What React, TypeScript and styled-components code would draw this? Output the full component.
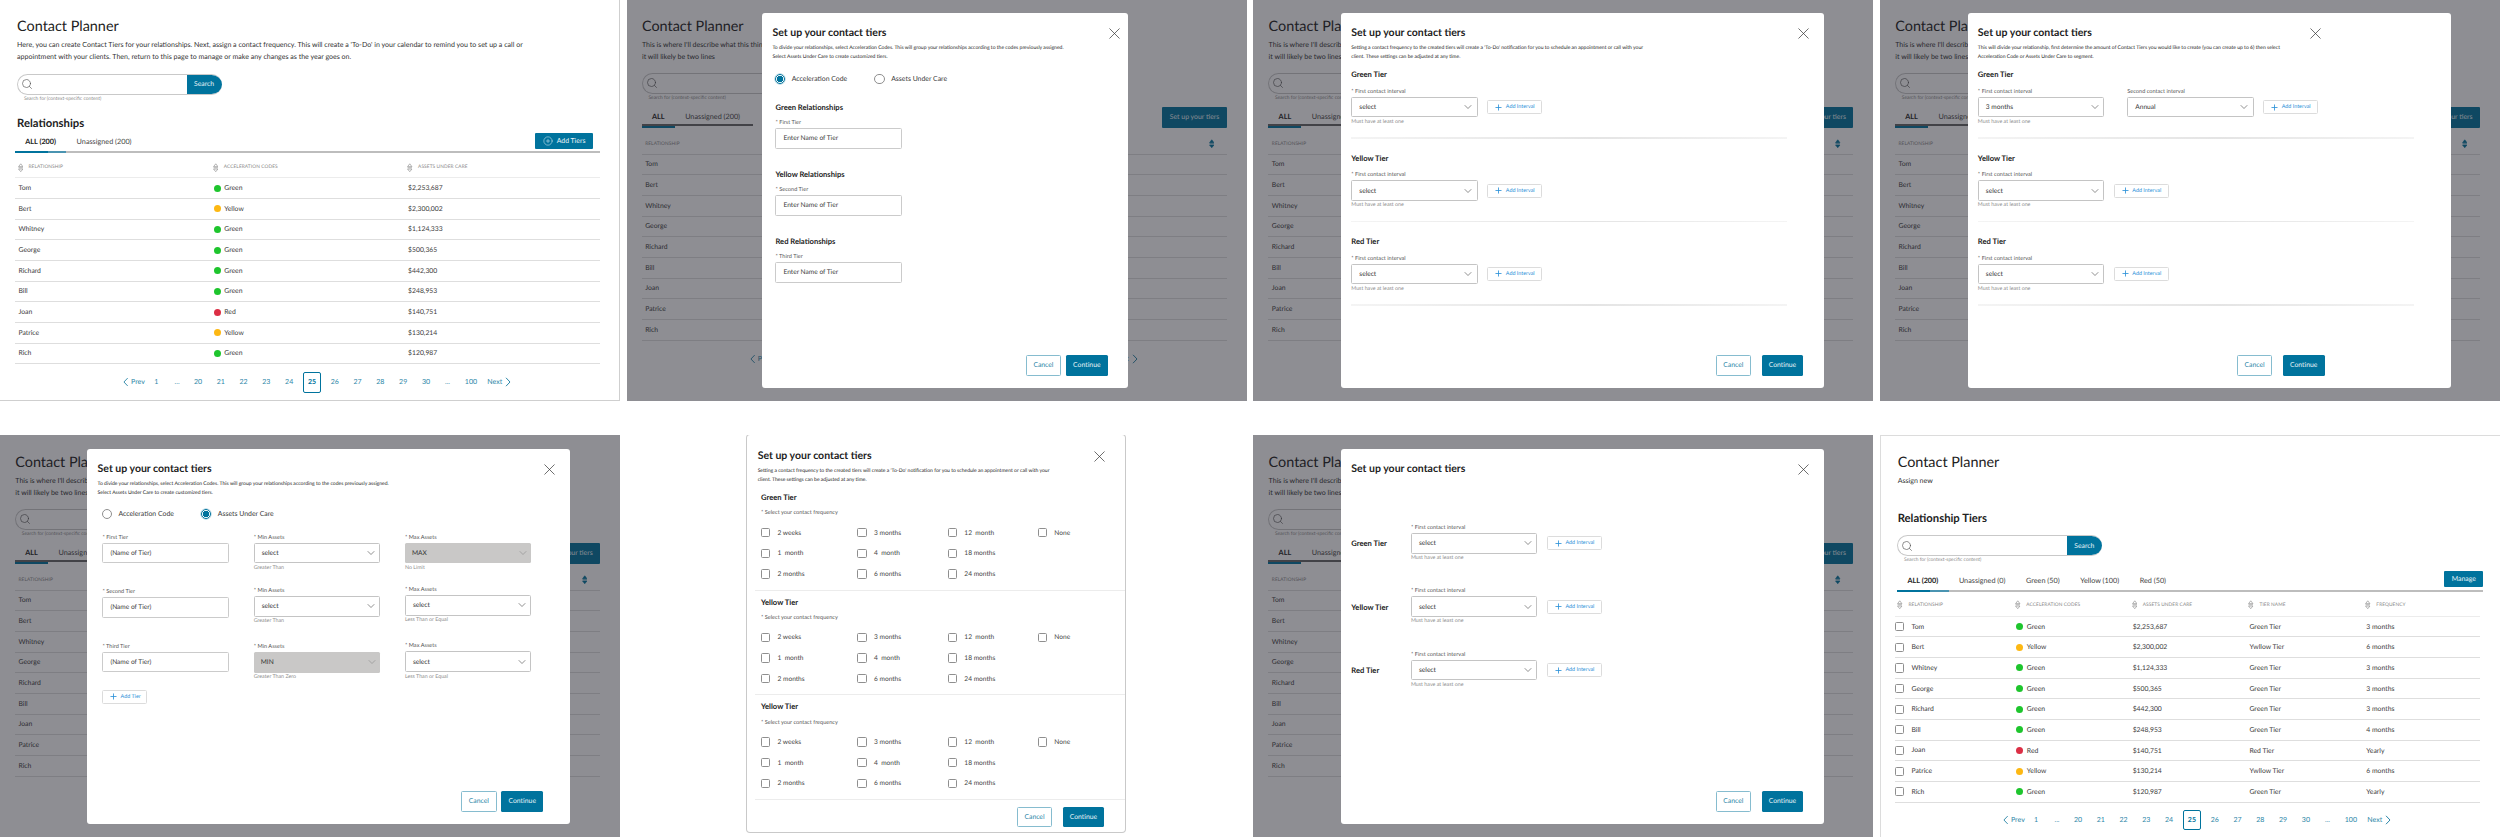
import * as React from 'react';
import styled, { createGlobalStyle } from 'styled-components';
import { ChevronDown, CirclePlus, Plus, Search, X } from 'lucide-react';

const TEAL = '#00739d';
const LINK = '#2d87a8';

const GlobalStyle = createGlobalStyle`
    html, body {
        margin: 0;
        padding: 0;
        background: #fff;
        overflow: hidden;
    }
    body {
        font-family: Lato, "Liberation Sans", sans-serif;
        color: #333;
        text-rendering: geometricPrecision;
    }
    * {
        box-sizing: border-box;
    }
`;

const names = ['Tom', 'Bert', 'Whitney', 'George', 'Richard', 'Bill', 'Joan', 'Patrice', 'Rich'];

const clients = [
    { name: 'Tom', code: 'Green', assets: '$2,253,687', tier: 'Green Tier', freq: '3 months' },
    { name: 'Bert', code: 'Yellow', assets: '$2,300,002', tier: 'Ywllow Tier', freq: '6 months' },
    { name: 'Whitney', code: 'Green', assets: '$1,124,333', tier: 'Green Tier', freq: '3 months' },
    { name: 'George', code: 'Green', assets: '$500,365', tier: 'Green Tier', freq: '3 months' },
    { name: 'Richard', code: 'Green', assets: '$442,300', tier: 'Green Tier', freq: '3 months' },
    { name: 'Bill', code: 'Green', assets: '$248,953', tier: 'Green Tier', freq: '4 months' },
    { name: 'Joan', code: 'Red', assets: '$140,751', tier: 'Red Tier', freq: 'Yearly' },
    { name: 'Patrice', code: 'Yellow', assets: '$130,214', tier: 'Ywllow Tier', freq: '6 months' },
    { name: 'Rich', code: 'Green', assets: '$120,987', tier: 'Green Tier', freq: 'Yearly' },
];

const dotColors: Record<string, string> = {
    Green: '#1ec52d',
    Yellow: '#fdb813',
    Red: '#dc2f45',
};

const frequencies = [
    ['2 weeks', '3 months', '12  month', 'None'],
    ['1  month', '4  month', '18 months', ''],
    ['2 months', '6 months', '24 months', ''],
];

const SortIcon = ({ solid }: { solid?: boolean }) => (
    <SortSvg viewBox="0 0 6 10" $solid={solid}>
        <path d="M3 .7 5.4 3.8H.6Z" />
        <path d="M.6 5h4.8" />
        <path d="M3 9.3.6 6.4h4.8Z" />
    </SortSvg>
);

const PagerArrow = ({ flip }: { flip?: boolean }) => (
    <svg width="6" height="10" viewBox="0 0 6 10" fill="none" stroke={LINK} strokeWidth="1">
        <path d={flip ? 'M1 .8 5 5 1 9.2' : 'M5 .8 1 5l4 4.2'} />
    </svg>
);

const Pager = ({ offset }: { offset: number }) => (
    <PagerRow $offset={offset}>
        <PagerEnd>
            <PagerArrow />
            Prev
        </PagerEnd>
        <PagerCell>1</PagerCell>
        <PagerGap $width={19}>...</PagerGap>
        {[20, 21, 22, 23, 24].map((n) => <PagerCell key={n}>{n}</PagerCell>)}
        <PagerCell><PagerActive>25</PagerActive></PagerCell>
        {[26, 27, 28, 29, 30].map((n) => <PagerCell key={n}>{n}</PagerCell>)}
        <PagerGap $width={20.4}>...</PagerGap>
        <PagerGap $width={26.4}>100</PagerGap>
        <PagerEnd $next>
            Next
            <PagerArrow flip />
        </PagerEnd>
    </PagerRow>
);

const SearchBox = ({ top, indent }: { top: number; indent: number }) => (
    <>
        <SearchBar $top={top} $indent={indent}>
            <SearchField>
                <Search size={12} strokeWidth={1.3} color="#555" />
            </SearchField>
            <SearchButton>Search</SearchButton>
        </SearchBar>
        <SearchHint $indent={indent + 6.8}>Search for (context-specific content)</SearchHint>
    </>
);

const DimmedPage = () => (
    <Page>
        <PageTitle $indent={0.3}>Contact Planner</PageTitle>
        <PageText $indent={0.3}>
            This is where I'll describe what this thing does<br />
            it will likely be two lines
        </PageText>
        <SearchBox top={11.1} indent={0} />
        <TabBar $top={6.3}>
            <TabList $width={111}>
                <Tab $active>ALL</Tab>
                <Tab>Unassigned (200)</Tab>
            </TabList>
            <ActionButton $width={64.3} $height={21} $raise={-1}>Set up your tiers</ActionButton>
        </TabBar>
        <DimHead>
            <HeadLabel>Relationship</HeadLabel>
            <SortIcon solid />
        </DimHead>
        {names.map((n) => <DimRow key={n}>{n}</DimRow>)}
        <Pager offset={8} />
    </Page>
);

const Field = ({ label, top, hint, children }: {
    label: string;
    top?: number;
    hint?: string;
    children: React.ReactNode;
}) => (
    <FieldWrap $top={top}>
        <FieldLabel>{label}</FieldLabel>
        {children}
        {hint && <FieldHint>{hint}</FieldHint>}
    </FieldWrap>
);

const Select = ({ value, disabled }: { value: string; disabled?: boolean }) => (
    <SelectBox $disabled={disabled}>
        {value}
        <ChevronDown size={12} strokeWidth={1.2} color={disabled ? '#8a8a8a' : '#444'} />
    </SelectBox>
);

const AddButton = ({ children, top, width, left }: {
    children: string;
    top: number;
    width: number;
    left?: number;
}) => (
    <AddBtn $top={top} $width={width} $left={left}>
        <Plus size={9} strokeWidth={2.2} />
        {children}
    </AddBtn>
);

const ModalHead = ({ closeRight, text }: { closeRight: number; text?: React.ReactNode }) => (
    <>
        <TitleRow $closeRight={closeRight}>
            <ModalTitle>Set up your contact tiers</ModalTitle>
            <CloseIcon size={19} strokeWidth={0.9} color="#333" />
        </TitleRow>
        {text && <ModalText>{text}</ModalText>}
    </>
);

const ModalFooter = ({ right, gap }: { right: number; gap: number }) => (
    <Footer $right={right} $gap={gap}>
        <CancelButton>Cancel</CancelButton>
        <ContinueButton>Continue</ContinueButton>
    </Footer>
);

const Radios = ({ picked, top, indent }: { picked: number; top: number; indent: number }) => (
    <RadioRow $top={top} $indent={indent}>
        {['Acceleration Code', 'Assets Under Care'].map((label, i) => (
            <RadioItem key={label}>
                <RadioMark $on={picked === i} />
                {label}
            </RadioItem>
        ))}
    </RadioRow>
);

const ACCEL_TEXT = (
    <>
        To divide your relationships, select Acceleration Codes. This will group your relationships according to the codes previously assigned.<br />
        Select Assets Under Care to create customized tiers.
    </>
);

const FREQ_TEXT = (
    <>
        Setting a contact frequency to the created tiers will create a 'To-Do' notification for you to schedule an appointment or call with your<br />
        client. These settings can be adjusted at any time.
    </>
);

const SEGMENT_TEXT = (
    <>
        This will divide your relationship, first determine the amount of Contact Tiers you would like to create (you can create up to 6) then select<br />
        Acceleration Code or Assets Under Care to segment.
    </>
);

const accelGroups = [
    ['Green Relationships', '* First Tier'],
    ['Yellow Relationships', '* Second Tier'],
    ['Red Relationships', '* Third Tier'],
];

const IntervalSections = ({ second }: { second?: boolean }) => (
    <>
        {['Green Tier', 'Yellow Tier', 'Red Tier'].map((tier, i) => (
            <IntervalSection key={tier}>
                <TierHeading>{tier}</TierHeading>
                <IntervalRow>
                    <Field label="* First contact interval" hint="Must have at least one">
                        <Select value={second && i === 0 ? '3 months' : 'select'} />
                    </Field>
                    {second && i === 0 && (
                        <SecondField>
                            <Field label="Second contact interval">
                                <Select value="Annual" />
                            </Field>
                        </SecondField>
                    )}
                    <AddButton top={12.25} width={55} left={9.3}>Add Interval</AddButton>
                </IntervalRow>
                <Divider />
            </IntervalSection>
        ))}
    </>
);

const assetColumns = [
    [
        { label: '* First Tier', top: 0 },
        { label: '* Second Tier', top: 16.4 },
        { label: '* Third Tier', top: 16.6 },
    ],
    [
        { label: '* Min Assets', top: 0, value: 'select', hint: 'Greater Than' },
        { label: '* Min Assets', top: 15.4, value: 'select', hint: 'Greater Than' },
        { label: '* Min Assets', top: 18, value: 'MIN', hint: 'Greater Than Zero', off: true },
    ],
    [
        { label: '* Max Assets', top: 0, value: 'MAX', hint: 'No Limit', off: true },
        { label: '* Max Assets', top: 14.4, value: 'select', hint: 'Less Than or Equal' },
        { label: '* Max Assets', top: 18.3, value: 'select', hint: 'Less Than or Equal' },
    ],
];

const MAIN_COLS = '195.2px 194.4px 1fr';
const TIER_COLS = '117.8px 116.4px 116.8px 116.9px 1fr';

const App = () => (
    <>
        <GlobalStyle />
        <Board>
            {/* landing */}
            <Frame $edge="inset -1px -1px 0 #cfcfcf">
                <Page>
                    <PageTitle $indent={2.1}>Contact Planner</PageTitle>
                    <PageText $indent={2.1}>
                        Here, you can create Contact Tiers for your relationships. Next, assign a contact frequency. This will create a 'To-Do' in your calendar to remind you to set up a call or<br />
                        appointment with your clients. Then, return to this page to manage or make any changes as the year goes on.
                    </PageText>
                    <SearchBox top={12.1} indent={2.1} />
                    <SectionTitle $top={14.3} $indent={2.1}>Relationships</SectionTitle>
                    <TabBar $top={2} $ruled>
                        <TabList>
                            <Tab $active>ALL (200)</Tab>
                            <Tab>Unassigned (200)</Tab>
                        </TabList>
                        <ActionButton $width={57.3} $height={16.3} $right={7.3}>
                            <CirclePlus size={10} strokeWidth={1.2} />
                            Add Tiers
                        </ActionButton>
                    </TabBar>
                    <TableHead $cols={MAIN_COLS} $height={25.7} $pad={4.9}>
                        <HeadCell><SortIcon /><HeadLabel>Relationship</HeadLabel></HeadCell>
                        <HeadCell><SortIcon /><HeadLabel>Acceleration Codes</HeadLabel></HeadCell>
                        <HeadCell><SortIcon /><HeadLabel>Assets Under Care</HeadLabel></HeadCell>
                    </TableHead>
                    {clients.map((c) => (
                        <TableRow key={c.name} $cols={MAIN_COLS}>
                            <Cell>{c.name}</Cell>
                            <Cell><Dot $color={dotColors[c.code]} />{c.code}</Cell>
                            <Cell>{c.assets}</Cell>
                        </TableRow>
                    ))}
                    <Pager offset={7.6} />
                </Page>
            </Frame>

            {/* acceleration code */}
            <Frame>
                <DimmedPage />
                <Backdrop $left={135.5} $top={14}>
                    <Modal $width={366} $height={375}>
                        <ModalHead closeRight={4.5} text={ACCEL_TEXT} />
                        <Radios picked={0} top={12.15} indent={2.45} />
                        {accelGroups.map(([title, label], i) => (
                            <AccelGroup key={title} $top={i === 0 ? 17.5 : 20}>
                                <TierHeading>{title}</TierHeading>
                                <AccelLabel>{label}</AccelLabel>
                                <TextBox>Enter Name of Tier</TextBox>
                            </AccelGroup>
                        ))}
                        <ModalFooter right={20.5} gap={4.8} />
                    </Modal>
                </Backdrop>
            </Frame>

            {/* intervals */}
            <Frame>
                <DimmedPage />
                <Backdrop $left={87.7} $top={14}>
                    <Modal $width={483} $height={375}>
                        <ModalHead closeRight={11.5} text={FREQ_TEXT} />
                        <IntervalSections />
                        <ModalFooter right={20.7} gap={10.5} />
                    </Modal>
                </Backdrop>
            </Frame>

            {/* second interval */}
            <Frame>
                <DimmedPage />
                <Backdrop $left={87.6} $top={14}>
                    <Modal $width={483} $height={375}>
                        <ModalHead closeRight={125.7} text={SEGMENT_TEXT} />
                        <IntervalSections second />
                        <ModalFooter right={126} gap={10.5} />
                    </Modal>
                </Backdrop>
            </Frame>

            {/* assets under care */}
            <Frame>
                <DimmedPage />
                <Backdrop $left={87.3} $top={14}>
                    <Modal $width={483} $height={375}>
                        <ModalHead closeRight={11.5} text={ACCEL_TEXT} />
                        <Radios picked={1} top={11.4} indent={3.95} />
                        <AssetGrid>
                            {assetColumns.map((col, c) => (
                                <AssetColumn key={c}>
                                    {col.map((f) => (
                                        <Field key={f.label + f.top} label={f.label} top={f.top} hint={'hint' in f ? f.hint : undefined}>
                                            {'value' in f
                                                ? <Select value={f.value as string} disabled={'off' in f} />
                                                : <TextBox>(Name of Tier)</TextBox>}
                                        </Field>
                                    ))}
                                </AssetColumn>
                            ))}
                        </AssetGrid>
                        <AddTierRow>
                            <AddButton top={0} width={45}>Add Tier</AddButton>
                        </AddTierRow>
                        <ModalFooter right={27.2} gap={4.8} />
                    </Modal>
                </Backdrop>
            </Frame>

            {/* contact frequency */}
            <Frame>
                <Backdrop $left={120.7} $top={0} $clear>
                    <Modal $width={378} $height={396.7} $outlined $bottom={4.4}>
                        <ModalHead closeRight={16.5} text={FREQ_TEXT} />
                        {['Green Tier', 'Yellow Tier', 'Yellow Tier'].map((tier, i) => (
                            <FreqSection key={tier + i} $top={i === 0 ? 1.5 : 0}>
                                <TierHeading>{tier}</TierHeading>
                                <FreqLabel>* Select your contact frequency</FreqLabel>
                                <FreqGrid>
                                    {frequencies.flat().map((f, k) => (
                                        <FreqItem key={k}>
                                            {f && <CheckBox />}
                                            {f}
                                        </FreqItem>
                                    ))}
                                </FreqGrid>
                            </FreqSection>
                        ))}
                        <ModalFooter right={21} gap={10.4} />
                    </Modal>
                </Backdrop>
            </Frame>

            {/* inline tier rows */}
            <Frame>
                <DimmedPage />
                <Backdrop $left={87.7} $top={14}>
                    <Modal $width={483} $height={375}>
                        <ModalHead closeRight={11.5} />
                        <InlineList>
                            {['Green Tier', 'Yellow Tier', 'Red Tier'].map((tier) => (
                                <InlineRow key={tier}>
                                    <InlineName>{tier}</InlineName>
                                    <Field label="* First contact interval" hint="Must have at least one">
                                        <Select value="select" />
                                    </Field>
                                    <AddButton top={12.25} width={55} left={9.3}>Add Interval</AddButton>
                                </InlineRow>
                            ))}
                        </InlineList>
                        <ModalFooter right={20.7} gap={10.5} />
                    </Modal>
                </Backdrop>
            </Frame>

            {/* tiers assigned */}
            <Frame $edge="inset 1px 1px 0 #dcdcdc">
                <Page>
                    <PageTitle $indent={2.7}>Contact Planner</PageTitle>
                    <PageText $indent={2.7}>Assign new</PageText>
                    <SectionTitle $top={25.1} $indent={2.7}>Relationship Tiers</SectionTitle>
                    <SearchBox top={9.6} indent={2.3} />
                    <TabBar $top={8.2} $ruled $indent={2.3} $overhang={3.5}>
                        <TabList>
                            <Tab $active>ALL (200)</Tab>
                            <Tab>Unassigned (0)</Tab>
                            <Tab>Green (50)</Tab>
                            <Tab>Yellow (100)</Tab>
                            <Tab>Red (50)</Tab>
                        </TabList>
                        <ActionButton $width={39.2} $height={16.3} $raise={-1.2}>Manage</ActionButton>
                    </TabBar>
                    <TableHead $cols={TIER_COLS} $height={24.9} $pad={2.7}>
                        {['Relationship', 'Acceleration Codes', 'Assets Under Care', 'Tier Name', 'Frequency'].map((h) => (
                            <HeadCell key={h}><SortIcon /><HeadLabel>{h}</HeadLabel></HeadCell>
                        ))}
                    </TableHead>
                    {clients.map((c) => (
                        <TableRow key={c.name} $cols={TIER_COLS}>
                            <Cell $flush><CheckBox />{c.name}</Cell>
                            <Cell><Dot $color={dotColors[c.code]} />{c.code}</Cell>
                            <Cell>{c.assets}</Cell>
                            <Cell>{c.tier}</Cell>
                            <Cell>{c.freq}</Cell>
                        </TableRow>
                    ))}
                    <Pager offset={6.9} />
                </Page>
            </Frame>
        </Board>
    </>
);

const Board = styled.div`
    width: 2500px;
    margin-top: -1px;
    display: grid;
    grid-template-columns: repeat(4, 620px);
    grid-auto-rows: 402px;
    column-gap: 6.667px;
    row-gap: 34px;
`;

const Frame = styled.section<{ $edge?: string }>`
    position: relative;
    overflow: hidden;
    background: #fff;
    box-shadow: ${(p) => p.$edge || 'none'};
`;

const Page = styled.div`
    height: 100%;
    padding: 20px 20px 0 15px;
    display: flex;
    flex-direction: column;
`;

const PageTitle = styled.h1<{ $indent: number }>`
    margin: 0 0 0 ${(p) => p.$indent}px;
    font-size: 14.4px;
    line-height: 16px;
    font-weight: 400;
    color: #222;
    white-space: nowrap;
`;

const PageText = styled.p<{ $indent: number }>`
    margin: 4.3px 0 0 ${(p) => p.$indent}px;
    font-size: 7.05px;
    line-height: 11.3px;
    color: #333;
    white-space: nowrap;
`;

const SearchBar = styled.div<{ $top: number; $indent: number }>`
    flex: none;
    width: 204.5px;
    height: 20.7px;
    margin: ${(p) => p.$top}px 0 0 ${(p) => p.$indent}px;
    display: flex;
    border: 1px solid #c9c9c9;
    border-right: 0;
    border-radius: 10.5px;
    overflow: hidden;
`;

const SearchField = styled.div`
    flex: 1;
    padding-left: 3px;
    display: flex;
    align-items: center;
`;

const SearchButton = styled.div`
    width: 35px;
    background: ${TEAL};
    color: #e8f4f8;
    font-size: 6.8px;
    display: flex;
    align-items: center;
    justify-content: center;
`;

const SearchHint = styled.div<{ $indent: number }>`
    margin: 1px 0 0 ${(p) => p.$indent}px;
    font-size: 4.9px;
    line-height: 7px;
    color: #8d8d8d;
`;

const SectionTitle = styled.h2<{ $top: number; $indent: number }>`
    margin: ${(p) => p.$top}px 0 0 ${(p) => p.$indent}px;
    font-size: 11.3px;
    line-height: 14px;
    font-weight: 700;
    color: #222;
`;

const TabBar = styled.div<{ $top: number; $ruled?: boolean; $indent?: number; $overhang?: number }>`
    flex: none;
    height: 19.7px;
    margin: ${(p) => p.$top}px ${(p) => -(p.$overhang ?? 0)}px 0 ${(p) => p.$indent ?? 0}px;
    display: flex;
    justify-content: space-between;
    align-items: flex-start;
    border-bottom: 2px solid ${(p) => (p.$ruled ? '#bdbdbd' : 'transparent')};
`;

const TabList = styled.div<{ $width?: number }>`
    height: 100%;
    width: ${(p) => (p.$width ? `${p.$width}px` : 'auto')};
    display: flex;
    border-bottom: ${(p) => (p.$width ? '2px solid #666' : '0')};
`;

const Tab = styled.div<{ $active?: boolean }>`
    position: relative;
    flex: none;
    padding: 0 10.3px;
    font-size: 7.25px;
    line-height: 17px;
    font-weight: ${(p) => (p.$active ? 700 : 400)};
    color: ${(p) => (p.$active ? '#222' : '#444')};

    &::after {
        content: '';
        display: ${(p) => (p.$active ? 'block' : 'none')};
        position: absolute;
        left: 0;
        right: 0;
        top: 17.7px;
        height: 2px;
        background: linear-gradient(90deg, ${TEAL} 33px, #4a94b1 33px);
    }
`;

const ActionButton = styled.div<{ $width: number; $height: number; $raise?: number; $right?: number }>`
    flex: none;
    width: ${(p) => p.$width}px;
    height: ${(p) => p.$height}px;
    margin: ${(p) => p.$raise ?? 0}px ${(p) => p.$right ?? 0}px 0 0;
    display: flex;
    align-items: center;
    justify-content: center;
    gap: 4px;
    background: ${TEAL};
    color: #e8f4f8;
    font-size: 6.9px;
    border-radius: 1px;
`;

const TableHead = styled.div<{ $cols: string; $height: number; $pad: number }>`
    flex: none;
    height: ${(p) => p.$height}px;
    padding-top: ${(p) => p.$pad}px;
    display: grid;
    grid-template-columns: ${(p) => p.$cols};
    align-items: center;
    border-bottom: 1.5px solid #ececec;
`;

const HeadCell = styled.div`
    padding-left: 2.5px;
    display: flex;
    align-items: center;
    gap: 5.5px;
`;

const HeadLabel = styled.span`
    font-size: 4.8px;
    letter-spacing: 0.02em;
    color: #888;
    text-transform: uppercase;
`;

const SortSvg = styled.svg<{ $solid?: boolean }>`
    flex: none;
    width: 5.5px;
    height: 9.5px;
    fill: ${(p) => (p.$solid ? TEAL : 'none')};
    stroke: ${(p) => (p.$solid ? TEAL : '#8a8a8a')};
    stroke-width: 0.7;
`;

const TableRow = styled.div<{ $cols: string }>`
    flex: none;
    height: 20.67px;
    display: grid;
    grid-template-columns: ${(p) => p.$cols};
    align-items: center;
    border-bottom: 1px solid #dedede;
`;

const Cell = styled.div<{ $flush?: boolean }>`
    padding-left: ${(p) => (p.$flush ? 0 : 3.5)}px;
    display: flex;
    align-items: center;
    font-size: 6.8px;
    color: #3a3a3a;
    white-space: nowrap;
`;

const Dot = styled.span<{ $color: string }>`
    flex: none;
    width: 7px;
    height: 7px;
    margin-right: 3.6px;
    border-radius: 50%;
    background: ${(p) => p.$color};
`;

const CheckBox = styled.span`
    flex: none;
    width: 9.5px;
    height: 9.3px;
    margin-right: 7px;
    border: 1px solid #8f8f8f;
    border-radius: 1.5px;
    background: #fff;
`;

const PagerRow = styled.div<{ $offset: number }>`
    flex: none;
    height: 20.7px;
    margin-top: ${(p) => p.$offset}px;
    padding-left: 108.4px;
    display: flex;
    align-items: center;
    font-size: 7px;
    color: ${LINK};
`;

const PagerEnd = styled.div<{ $next?: boolean }>`
    flex: none;
    width: ${(p) => (p.$next ? 30 : 21.4)}px;
    margin-left: ${(p) => (p.$next ? 3.2 : 0)}px;
    display: flex;
    align-items: center;
    gap: ${(p) => (p.$next ? 3 : 2)}px;
`;

const PagerCell = styled.div`
    flex: none;
    width: 22.8px;
    display: flex;
    justify-content: center;
`;

const PagerGap = styled.div<{ $width: number }>`
    flex: none;
    width: ${(p) => p.$width}px;
    text-align: center;
`;

const PagerActive = styled.div`
    flex: none;
    width: 18.2px;
    height: 20.7px;
    display: flex;
    align-items: center;
    justify-content: center;
    border: 1.2px solid ${TEAL};
    border-radius: 2px;
    font-weight: 700;
    color: ${TEAL};
`;

const DimHead = styled.div`
    flex: none;
    height: 27px;
    padding: 7px 12.6px 0 3.5px;
    display: flex;
    align-items: center;
    justify-content: space-between;
    border-bottom: 1px solid #dedede;
`;

const DimRow = styled.div`
    flex: none;
    height: 20.67px;
    padding-left: 3.5px;
    display: flex;
    align-items: center;
    font-size: 6.8px;
    color: #3a3a3a;
    border-bottom: 1px solid #dedede;
`;

const Backdrop = styled.div<{ $left: number; $top: number; $clear?: boolean }>`
    position: absolute;
    inset: 0;
    padding: ${(p) => p.$top}px 0 0 ${(p) => p.$left}px;
    background: ${(p) => (p.$clear ? 'transparent' : 'rgba(30, 30, 40, 0.5)')};
`;

const Modal = styled.div<{ $width: number; $height: number; $outlined?: boolean; $bottom?: number }>`
    width: ${(p) => p.$width}px;
    height: ${(p) => p.$height}px;
    padding: ${(p) => (p.$outlined ? 13 : 12)}px 0 ${(p) => p.$bottom ?? 12.3}px 10.3px;
    display: flex;
    flex-direction: column;
    background: #fff;
    border-radius: 3px;
    box-shadow: ${(p) => (p.$outlined ? '0 0 0 1px #c9c9c9' : 'none')};
`;

const TitleRow = styled.div<{ $closeRight: number }>`
    flex: none;
    height: 16px;
    padding-right: ${(p) => p.$closeRight}px;
    display: flex;
    align-items: center;
    justify-content: space-between;
`;

const ModalTitle = styled.h2`
    margin: 0;
    font-size: 10.5px;
    line-height: 16px;
    font-weight: 700;
    color: #222;
`;

const CloseIcon = styled(X)`
    flex: none;
`;

const ModalText = styled.p`
    flex: none;
    margin: 3.2px 0 0;
    font-size: 5.05px;
    line-height: 8.7px;
    color: #222;
    white-space: nowrap;
`;

const RadioRow = styled.div<{ $top: number; $indent: number }>`
    flex: none;
    height: 10.5px;
    margin: ${(p) => p.$top}px 0 0 ${(p) => p.$indent}px;
    display: flex;
`;

const RadioItem = styled.div`
    width: 99.4px;
    display: flex;
    align-items: center;
    gap: 6.4px;
    font-size: 6.9px;
    color: #3a3a3a;
`;

const RadioMark = styled.span<{ $on: boolean }>`
    flex: none;
    width: 10.5px;
    height: 10.5px;
    border-radius: 50%;
    border: 1px solid ${(p) => (p.$on ? TEAL : '#8f8f8f')};
    background: ${(p) => (p.$on ? `radial-gradient(circle, ${TEAL} 0 3.1px, #fff 3.5px)` : '#fff')};
    box-shadow: ${(p) => (p.$on ? '0 0 0 0.7px rgba(0, 115, 157, 0.3)' : 'none')};
`;

const AccelGroup = styled.div<{ $top: number }>`
    flex: none;
    margin: ${(p) => p.$top}px 0 0 3px;
`;

const TierHeading = styled.h3`
    margin: 0;
    font-size: 7.6px;
    line-height: 10.5px;
    font-weight: 700;
    color: #222;
`;

const AccelLabel = styled.div`
    margin: 6.75px 0 1px;
    font-size: 5.6px;
    line-height: 8px;
    color: #555;
`;

const TextBox = styled.div`
    width: 126.5px;
    height: 20.7px;
    padding-left: 7px;
    display: flex;
    align-items: center;
    border: 1px solid #cbcbcb;
    border-bottom-width: 1.5px;
    border-radius: 1.5px;
    font-size: 6.6px;
    color: #3a3a3a;
    background: #fff;
`;

const IntervalSection = styled.div`
    flex: none;
    margin-top: 7.85px;

    & + & {
        margin-top: 14.05px;
    }
`;

const IntervalRow = styled.div`
    margin-top: 8.05px;
    display: flex;
    align-items: flex-start;
`;

const SecondField = styled.div`
    margin-left: 23px;
`;

const Divider = styled.div`
    width: 436px;
    height: 1.5px;
    margin-top: 11.2px;
    background: linear-gradient(90deg, #f4f4f4, #e4e4e4 55%, #f4f4f4);
`;

const FieldWrap = styled.div<{ $top?: number }>`
    flex: none;
    width: 126.4px;
    min-height: 38px;
    margin-top: ${(p) => p.$top ?? 0}px;
`;

const FieldLabel = styled.div`
    margin-bottom: 1px;
    font-size: 5.6px;
    line-height: 8px;
    color: #555;
    white-space: nowrap;
`;

const FieldHint = styled.div`
    margin-top: 0.6px;
    font-size: 5.3px;
    line-height: 8px;
    color: #8d8d8d;
    white-space: nowrap;
`;

const SelectBox = styled.div<{ $disabled?: boolean }>`
    height: 20.5px;
    padding: 0 2.4px 0 7px;
    display: flex;
    align-items: center;
    justify-content: space-between;
    border: ${(p) => (p.$disabled ? '0' : '1px solid #c4c4c4')};
    border-radius: 1.5px;
    background: ${(p) => (p.$disabled ? '#c9c8c7' : '#fff')};
    font-size: 6.6px;
    color: #333;
`;

const AddBtn = styled.div<{ $top: number; $width: number; $left?: number }>`
    flex: none;
    width: ${(p) => p.$width}px;
    height: 14px;
    margin: ${(p) => p.$top}px 0 0 ${(p) => p.$left ?? 0}px;
    display: flex;
    align-items: center;
    justify-content: center;
    gap: 2.5px;
    border: 1px solid #dcdcdc;
    border-radius: 1.5px;
    font-size: 5.4px;
    color: #2a90d8;
    background: #fff;
`;

const AssetGrid = styled.div`
    flex: none;
    margin: 14.1px 0 0 4.8px;
    display: grid;
    grid-template-columns: repeat(3, 126.4px);
    column-gap: 24.9px;
`;

const AssetColumn = styled.div`
    display: flex;
    flex-direction: column;
`;

const AddTierRow = styled.div`
    margin: 8.7px 0 0 4.8px;
    display: flex;
`;

const FreqSection = styled.div<{ $top: number }>`
    flex: none;
    margin: ${(p) => p.$top}px 0 0 -2.7px;
    padding: 5.9px 0 5.3px 6px;
    border-bottom: 1px solid #ececec;
`;

const FreqLabel = styled.div`
    margin: 7px 0 5px;
    font-size: 5.6px;
    line-height: 8px;
    color: #555;
`;

const FreqGrid = styled.div`
    display: grid;
    grid-template-columns: 96.5px 90.4px 90px 60px;
    grid-auto-rows: 20.67px;
    align-items: center;
`;

const FreqItem = styled.div`
    display: flex;
    align-items: center;
    white-space: pre;
    font-size: 6.6px;
    color: #444;
`;

const InlineList = styled.div`
    flex: none;
    margin-top: 47px;
    display: flex;
    flex-direction: column;
    gap: 25.3px;
`;

const InlineRow = styled.div`
    display: flex;
    align-items: flex-start;
`;

const InlineName = styled.div`
    flex: none;
    width: 59.7px;
    margin-top: 14.2px;
    font-size: 7.6px;
    line-height: 10.5px;
    font-weight: 700;
    color: #222;
`;

const Footer = styled.div<{ $right: number; $gap: number }>`
    margin-top: auto;
    padding-right: ${(p) => p.$right}px;
    display: flex;
    justify-content: flex-end;
    gap: ${(p) => p.$gap}px;
`;

const CancelButton = styled.div`
    width: 35.5px;
    height: 20.7px;
    display: flex;
    align-items: center;
    justify-content: center;
    border: 1px solid #86bccf;
    border-radius: 1.5px;
    font-size: 6.8px;
    color: ${LINK};
    background: #fff;
`;

const ContinueButton = styled.div`
    width: 41.7px;
    height: 20.7px;
    display: flex;
    align-items: center;
    justify-content: center;
    border-radius: 1.5px;
    font-size: 6.8px;
    color: #e8f4f8;
    background: ${TEAL};
`;

export default App;
